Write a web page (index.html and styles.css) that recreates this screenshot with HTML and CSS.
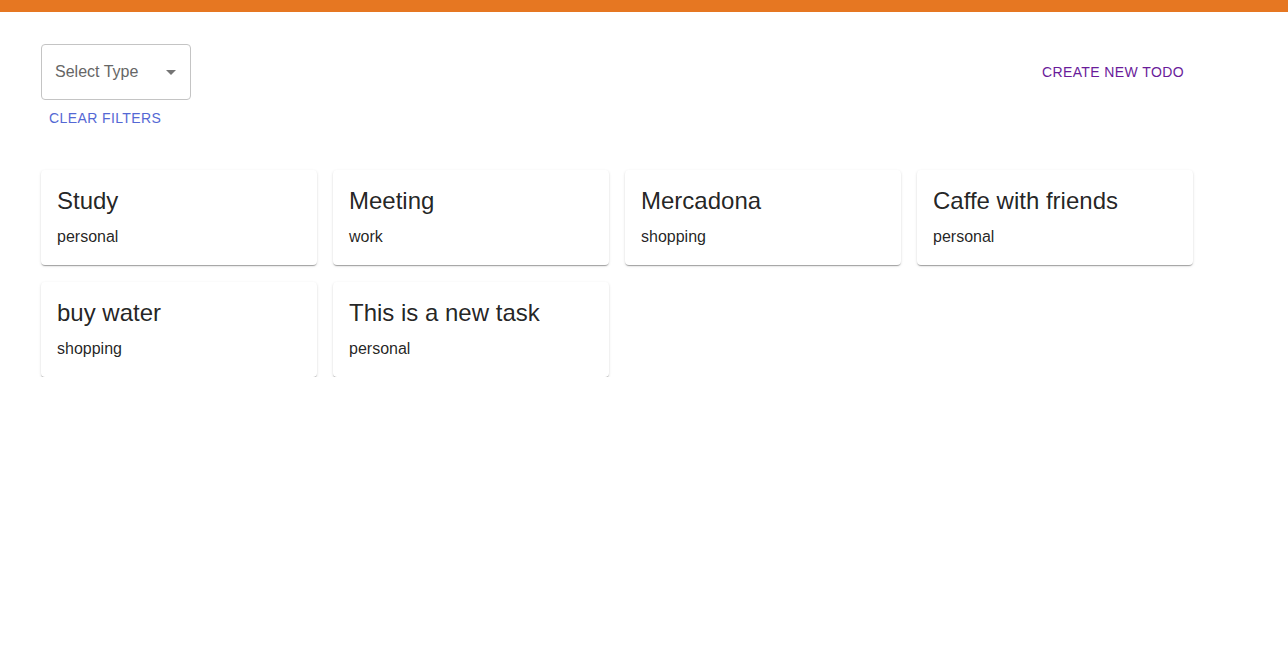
FILE: index.html
```html
<!DOCTYPE html>
<html>
<head>
<meta charset="utf-8">
<link rel="stylesheet" href="styles.css">
</head>
<body>
<div class="topbar"></div>
<main class="page">
  <div class="toolbar">
    <div class="filters">
      <div class="select">
        <span class="select-label">Select Type</span>
        <svg class="select-arrow" width="24" height="24" viewBox="0 0 24 24"><path d="M7 10l5 5 5-5z" fill="#757575"/></svg>
      </div>
      <button class="btn btn-clear">CLEAR FILTERS</button>
    </div>
    <button class="btn btn-create">CREATE NEW TODO</button>
  </div>
  <div class="grid">
    <div class="card"><div class="card-title">Study</div><div class="card-type">personal</div></div>
    <div class="card"><div class="card-title">Meeting</div><div class="card-type">work</div></div>
    <div class="card"><div class="card-title">Mercadona</div><div class="card-type">shopping</div></div>
    <div class="card"><div class="card-title">Caffe with friends</div><div class="card-type">personal</div></div>
    <div class="card"><div class="card-title">buy water</div><div class="card-type">shopping</div></div>
    <div class="card"><div class="card-title">This is a new task</div><div class="card-type">personal</div></div>
  </div>
</main>
</body>
</html>
```

FILE: styles.css
```css
* { box-sizing: border-box; }
body {
  margin: 0;
  font-family: "Liberation Sans", Arial, sans-serif;
  background: #fff;
  color: rgba(0,0,0,0.87);
}
.topbar {
  height: 12px;
  background: #e67722;
}
.page {
  width: 1152px;
  margin-left: 41px;
  padding-top: 32px;
}
.toolbar {
  display: flex;
  justify-content: space-between;
  align-items: flex-start;
}
.filters {
  display: flex;
  flex-direction: column;
  align-items: flex-start;
}
.select {
  width: 150px;
  height: 56px;
  border: 1px solid #c4c4c4;
  border-radius: 4px;
  display: flex;
  align-items: center;
  padding-left: 13px;
  position: relative;
}
.select-label {
  font-size: 16px;
  color: #666;
}
.select-arrow {
  position: absolute;
  right: 7px;
  top: 15px;
}
.btn {
  border: 0;
  background: transparent;
  font-family: "Liberation Sans", Arial, sans-serif;
  font-size: 14px;
  letter-spacing: 0.4px;
  padding: 6px 8px;
  line-height: 24px;
  cursor: pointer;
}
.btn-clear {
  color: #5468d4;
  margin-top: 0;
}
.btn-create {
  color: #6a1b9a;
  margin-top: 10px;
  margin-right: 1px;
}
.grid {
  display: grid;
  grid-template-columns: repeat(4, 276px);
  column-gap: 16px;
  row-gap: 17px;
  margin-top: 34px;
}
.card {
  background: #fff;
  border-radius: 4px;
  box-shadow: 0 2px 1px -1px rgba(0,0,0,0.2), 0 1px 1px 0 rgba(0,0,0,0.14), 0 1px 3px 0 rgba(0,0,0,0.12);
  padding: 15px 16px 15px;
  height: 95px;
}
.card-title {
  font-size: 24px;
  line-height: 32px;
  margin-bottom: 8px;
}
.card-type {
  font-size: 16px;
  line-height: 24px;
}
```
